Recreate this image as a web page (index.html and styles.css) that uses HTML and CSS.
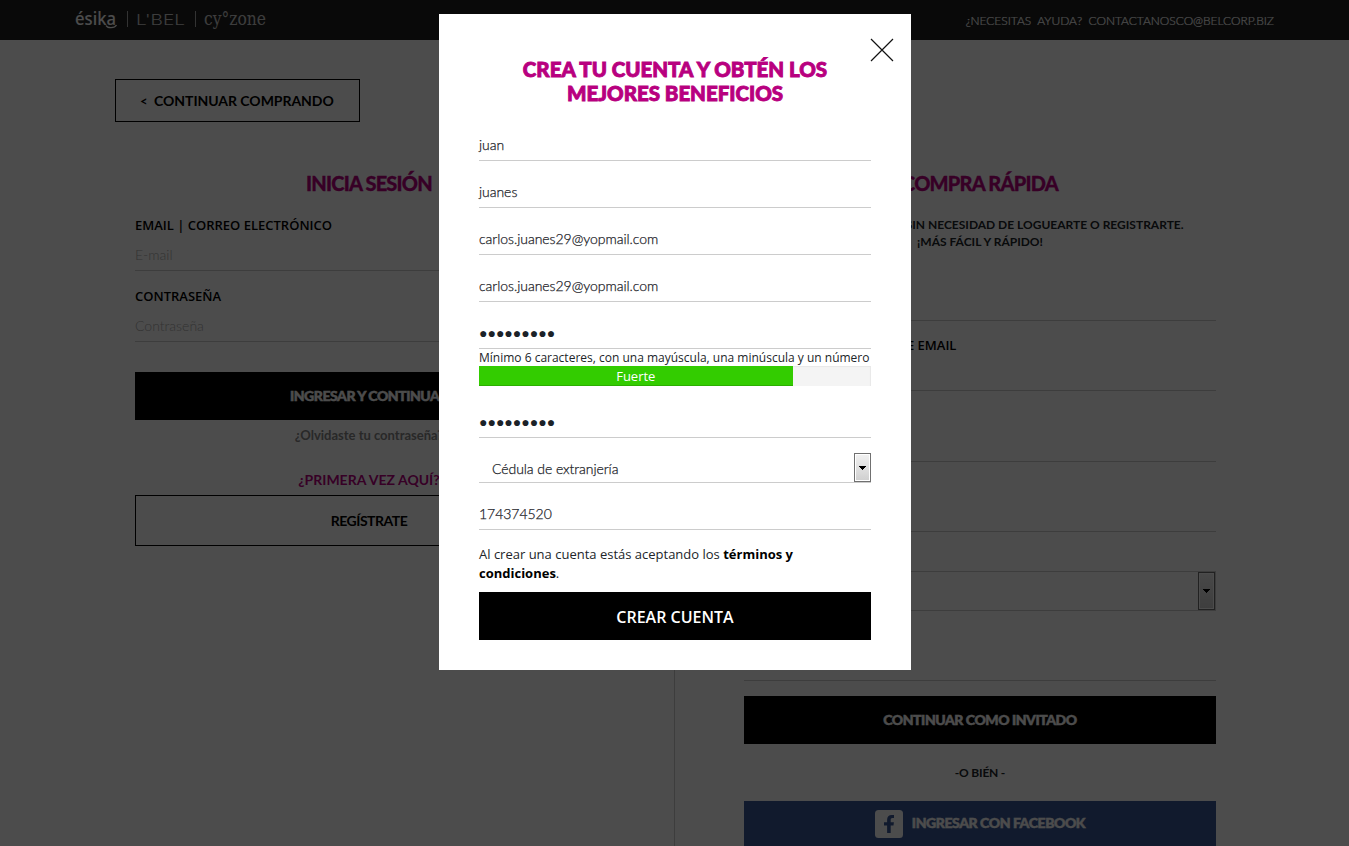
FILE: index.html
```html
<!DOCTYPE html>
<html lang="es">
<head>
<meta charset="utf-8">
<title>Crea tu cuenta</title>
<link rel="stylesheet" href="styles.css">
</head>
<body>
<div class="page">
  <header class="topbar">
    <svg class="brands" width="200" height="40" viewBox="0 0 200 40" fill="#fff">
      <text class="brand-esika" x="0" y="25" textLength="41" lengthAdjust="spacingAndGlyphs">ésika</text>
      <path d="M31 25.5c1.500 3 8.500 3 10.500-.5" fill="none" stroke="#fff" stroke-width="1.300"/>
      <path d="M52.500 11v16M120.500 11v16" stroke="#aaa" stroke-width="1"/>
      <text class="brand-lbel" x="61" y="25" textLength="49" lengthAdjust="spacingAndGlyphs">L'BEL</text>
      <text class="brand-cyzone" x="129" y="25" textLength="62" lengthAdjust="spacingAndGlyphs">cy°zone</text>
    </svg>
    <div class="help">¿NECESITAS&nbsp; AYUDA?&nbsp; CONTACTANOSCO@BELCORP.BIZ</div>
  </header>
  <a class="back"><span class="back-arrow">&lt;</span>CONTINUAR COMPRANDO</a>
  <main class="columns">
    <section class="login">
      <h2 class="heading">INICIA SESIÓN</h2>
      <label class="label">EMAIL | CORREO ELECTRÓNICO</label>
      <div class="field">E-mail</div>
      <label class="label label-second">CONTRASEÑA</label>
      <div class="field">Contraseña</div>
      <div class="button button-login">INGRESAR Y CONTINUAR</div>
      <div class="forgot">¿Olvidaste tu contraseña?</div>
      <div class="first-time">¿PRIMERA VEZ AQUÍ?</div>
      <div class="register">REGÍSTRATE</div>
    </section>
    <section class="guest">
      <h2 class="heading">COMPRA RÁPIDA</h2>
      <p class="intro">FINALIZA TU COMPRA SIN NECESIDAD DE LOGUEARTE O REGISTRARTE.<br>¡MÁS FÁCIL Y RÁPIDO!</p>
      <div class="guest-line guest-line-first"></div>
      <div class="guest-line"><span class="guest-label">CONFIRMAR DIRECCIÓN DE EMAIL</span></div>
      <div class="guest-line guest-line-tall"></div>
      <div class="guest-line"></div>
      <div class="guest-select">
        <span class="drop drop-tall"><svg width="7" height="4" viewBox="0 0 7 4"><path d="M0 0h7v1H6v1H5v1H4v1H3V3H2V2H1V1H0z"/></svg></span>
      </div>
      <div class="guest-line"></div>
      <div class="button button-guest">CONTINUAR COMO INVITADO</div>
      <div class="or">-O BIÉN -</div>
      <div class="facebook">
        <svg width="28" height="28" viewBox="0 0 28 28"><rect width="28" height="28" rx="3.5" fill="#fff"/><path d="M12.1 23v-7.5H9v-3.2h3.1V9.8c0-3.2 1.7-4.9 4.6-4.9H19v3.1h-1.6c-1.3 0-1.7.7-1.7 1.9v2.4h3.2l-.4 3.2h-2.8V23z" fill="#3b5998"/></svg>
        <span class="facebook-text">INGRESAR CON FACEBOOK</span>
      </div>
    </section>
  </main>
</div>
<div class="overlay">
  <div class="modal">
    <svg class="close" width="24" height="24" viewBox="0 0 24 24"><path d="M1 1l22 22M23 1L1 23" stroke="#111" stroke-width="1.2"/></svg>
    <h1 class="title">CREA TU CUENTA Y OBTÉN LOS<br>MEJORES BENEFICIOS</h1>
    <div class="input input-first">juan</div>
    <div class="input">juanes</div>
    <div class="input">carlos.juanes29@yopmail.com</div>
    <div class="input">carlos.juanes29@yopmail.com</div>
    <div class="input password">●●●●●●●●●</div>
    <div class="hint">Mínimo 6 caracteres, con una mayúscula, una minúscula y un número</div>
    <div class="meter"><div class="meter-fill">Fuerte</div></div>
    <div class="input password confirm">●●●●●●●●●</div>
    <div class="select">
      <span class="select-text">Cédula de extranjería</span>
      <span class="drop"><svg width="7" height="4" viewBox="0 0 7 4"><path d="M0 0h7v1H6v1H5v1H4v1H3V3H2V2H1V1H0z"/></svg></span>
    </div>
    <div class="input">174374520</div>
    <p class="terms">Al crear una cuenta estás aceptando los <b>términos y<br>condiciones</b>.</p>
    <div class="create">CREAR CUENTA</div>
  </div>
</div>
</body>
</html>
```
FILE: styles.css
```css
* { box-sizing: border-box; }
body {
  margin: 0;
  height: 846px;
  overflow: hidden;
  background: #fff;
  color: #212529;
  font-family: Lato, sans-serif;
}
h1, h2, p { margin: 0; }
.page { height: 846px; overflow: hidden; }

/* Header */
.topbar {
  height: 40px;
  padding: 0 75px;
  background: #212121;
  color: #fff;
  display: flex;
  justify-content: space-between;
}
.brands { display: block; }
.brand-esika { font: 500 18px "Noto Sans", sans-serif; }
.brand-lbel { font: 300 14px Inter, sans-serif; fill: #ccc; }
.brand-cyzone { font: 400 18px "DejaVu Serif", serif; fill: #ccc; }
.help { font-size: 12px; font-weight: 300; line-height: 41px; letter-spacing: -0.02px; white-space: nowrap; -webkit-text-stroke: 0.2px #fff; }

.back {
  display: flex;
  align-items: center;
  width: 245px;
  height: 43px;
  margin: 39px 0 0 115px;
  padding-left: 24px;
  border: 1px solid #000;
  color: #000;
  font-size: 14px;
  font-weight: 700;
  letter-spacing: -0.04px;
  white-space: nowrap;
}
.back-arrow { width: 14px; font-size: 13px; }

/* Columns behind the dialog */
.columns { display: flex; height: 724px; }
.login {
  width: 675px;
  padding: 49px 71px 0 135px;
  border-right: 1px solid #ccc;
}
.guest { width: 541px; padding: 49px 0 0 69px; }
.heading {
  height: 24px;
  color: #b8007f;
  font-size: 20px;
  font-weight: 900;
  line-height: 24px;
  letter-spacing: -0.8px;
  text-align: center;
  -webkit-text-stroke: 0.3px #b8007f;
}
.label {
  display: block;
  height: 20px;
  margin-top: 20px;
  color: #000;
  font: 600 13px/20px "Open Sans", sans-serif;
}
.label-second { margin-top: 15px; }
.field {
  height: 36px;
  border-bottom: 1px solid #ccc;
  color: #aaa;
  font-size: 14px;
  font-weight: 300;
  line-height: 40px;
}
.button {
  height: 48px;
  background: #000;
  color: #fff;
  font-size: 14px;
  font-weight: 900;
  line-height: 48px;
  letter-spacing: -0.46px;
  text-align: center;
  -webkit-text-stroke: 0.5px #fff;
}
.button-login { margin-top: 30px; }
.forgot { height: 31px; color: #888; font-size: 13px; font-weight: 700; line-height: 30px; text-align: center; }
.first-time { height: 25px; margin-top: 19px; color: #b8007f; font-size: 14px; font-weight: 700; line-height: 20px; text-align: center; }
.register {
  height: 51px;
  border: 1px solid #000;
  color: #000;
  font-size: 14px;
  font-weight: 700;
  line-height: 50px;
  letter-spacing: -0.5px;
  text-align: center;
}
.intro { height: 34px; margin-top: 21px; font-size: 12px; font-weight: 700; line-height: 17px; text-align: center; white-space: nowrap; }
.guest-line { height: 70px; border-bottom: 1px solid #ccc; }
.guest-line-first,
.guest-line-tall { height: 71px; }
.guest-label {
  display: block;
  padding-top: 14px;
  color: #000;
  font: 600 13px/20px "Open Sans", sans-serif;
  white-space: nowrap;
}
.guest-select {
  display: flex;
  justify-content: flex-end;
  height: 40px;
  margin-top: 39px;
  border: 1px solid #ccc;
}
.button-guest { margin-top: 15px; }
.or { height: 57px; font-size: 12px; font-weight: 700; line-height: 57px; letter-spacing: -0.2px; text-align: center; }
.facebook {
  display: flex;
  align-items: center;
  justify-content: center;
  gap: 9px;
  height: 46px;
  background: #3b5998;
  color: #fff;
  font-size: 14px;
  font-weight: 900;
  letter-spacing: -0.42px;
}
.facebook-text { padding-bottom: 4px; -webkit-text-stroke: 0.5px #fff; }

.drop {
  display: flex;
  align-items: center;
  justify-content: center;
  width: 17px;
  height: 29px;
  border: 1px solid #707070;
  box-shadow: inset 0 0 0 1px #fff;
  background: linear-gradient(#f2f2f2, #cfcfcf);
}
.drop-tall { height: 38px; }

/* Dialog */
.overlay {
  position: absolute;
  inset: 0;
  padding-top: 14px;
  background: rgba(0, 0, 0, 0.7);
}
.modal {
  position: relative;
  width: 472px;
  height: 656px;
  margin-left: 439px;
  padding: 43px 40px 30px;
  background: #fff;
}
.close { position: absolute; top: 24px; right: 17px; }
.title {
  height: 48px;
  color: #b8007f;
  font-size: 20.5px;
  font-weight: 900;
  line-height: 24px;
  letter-spacing: -0.02px;
  text-align: center;
  white-space: nowrap;
  -webkit-text-stroke: 0.9px #b8007f;
}
.input {
  height: 30px;
  margin-top: 17px;
  border-bottom: 1px solid #ccc;
  font-size: 14px;
  font-weight: 300;
  line-height: 27px;
  letter-spacing: -0.04px;
  color: #1c2228;
  -webkit-text-stroke: 0.25px #1c2228;
}
.input-first { margin-top: 26px; }
.password {
  font-family: "DejaVu Sans", sans-serif;
  font-size: 14px;
  line-height: 29px;
  letter-spacing: 0;
  -webkit-text-stroke: 0;
}
.hint { height: 17px; font: 400 12px/18px "Open Sans", sans-serif; white-space: nowrap; }
.meter { height: 20px; background: #f4f4f4; box-shadow: inset -1px 1px 1px #e8e8e8; }
.meter-fill {
  width: 80%;
  height: 20px;
  background: #3c0;
  box-shadow: inset 0 -1px 0 #2cae00;
  color: #fff;
  font: 400 13px/20px "Open Sans", sans-serif;
  text-align: center;
}
.confirm { margin-top: 22px; }
.select {
  display: flex;
  justify-content: space-between;
  height: 30px;
  margin-top: 15px;
  padding-left: 13px;
  border-bottom: 1px solid #ccc;
  font-size: 14px;
  font-weight: 300;
  line-height: 32px;
  letter-spacing: -0.06px;
}
.select-text { -webkit-text-stroke: 0.25px #1c2228; }
.terms { height: 38px; margin-top: 15px; font: 400 13px/19px "Open Sans", sans-serif; white-space: nowrap; }
.terms b { color: #000; font-weight: 700; }
.create {
  height: 48px;
  margin-top: 9px;
  background: #000;
  color: #fff;
  font: 600 16px/50px "Open Sans", sans-serif;
  text-align: center;
}
```
